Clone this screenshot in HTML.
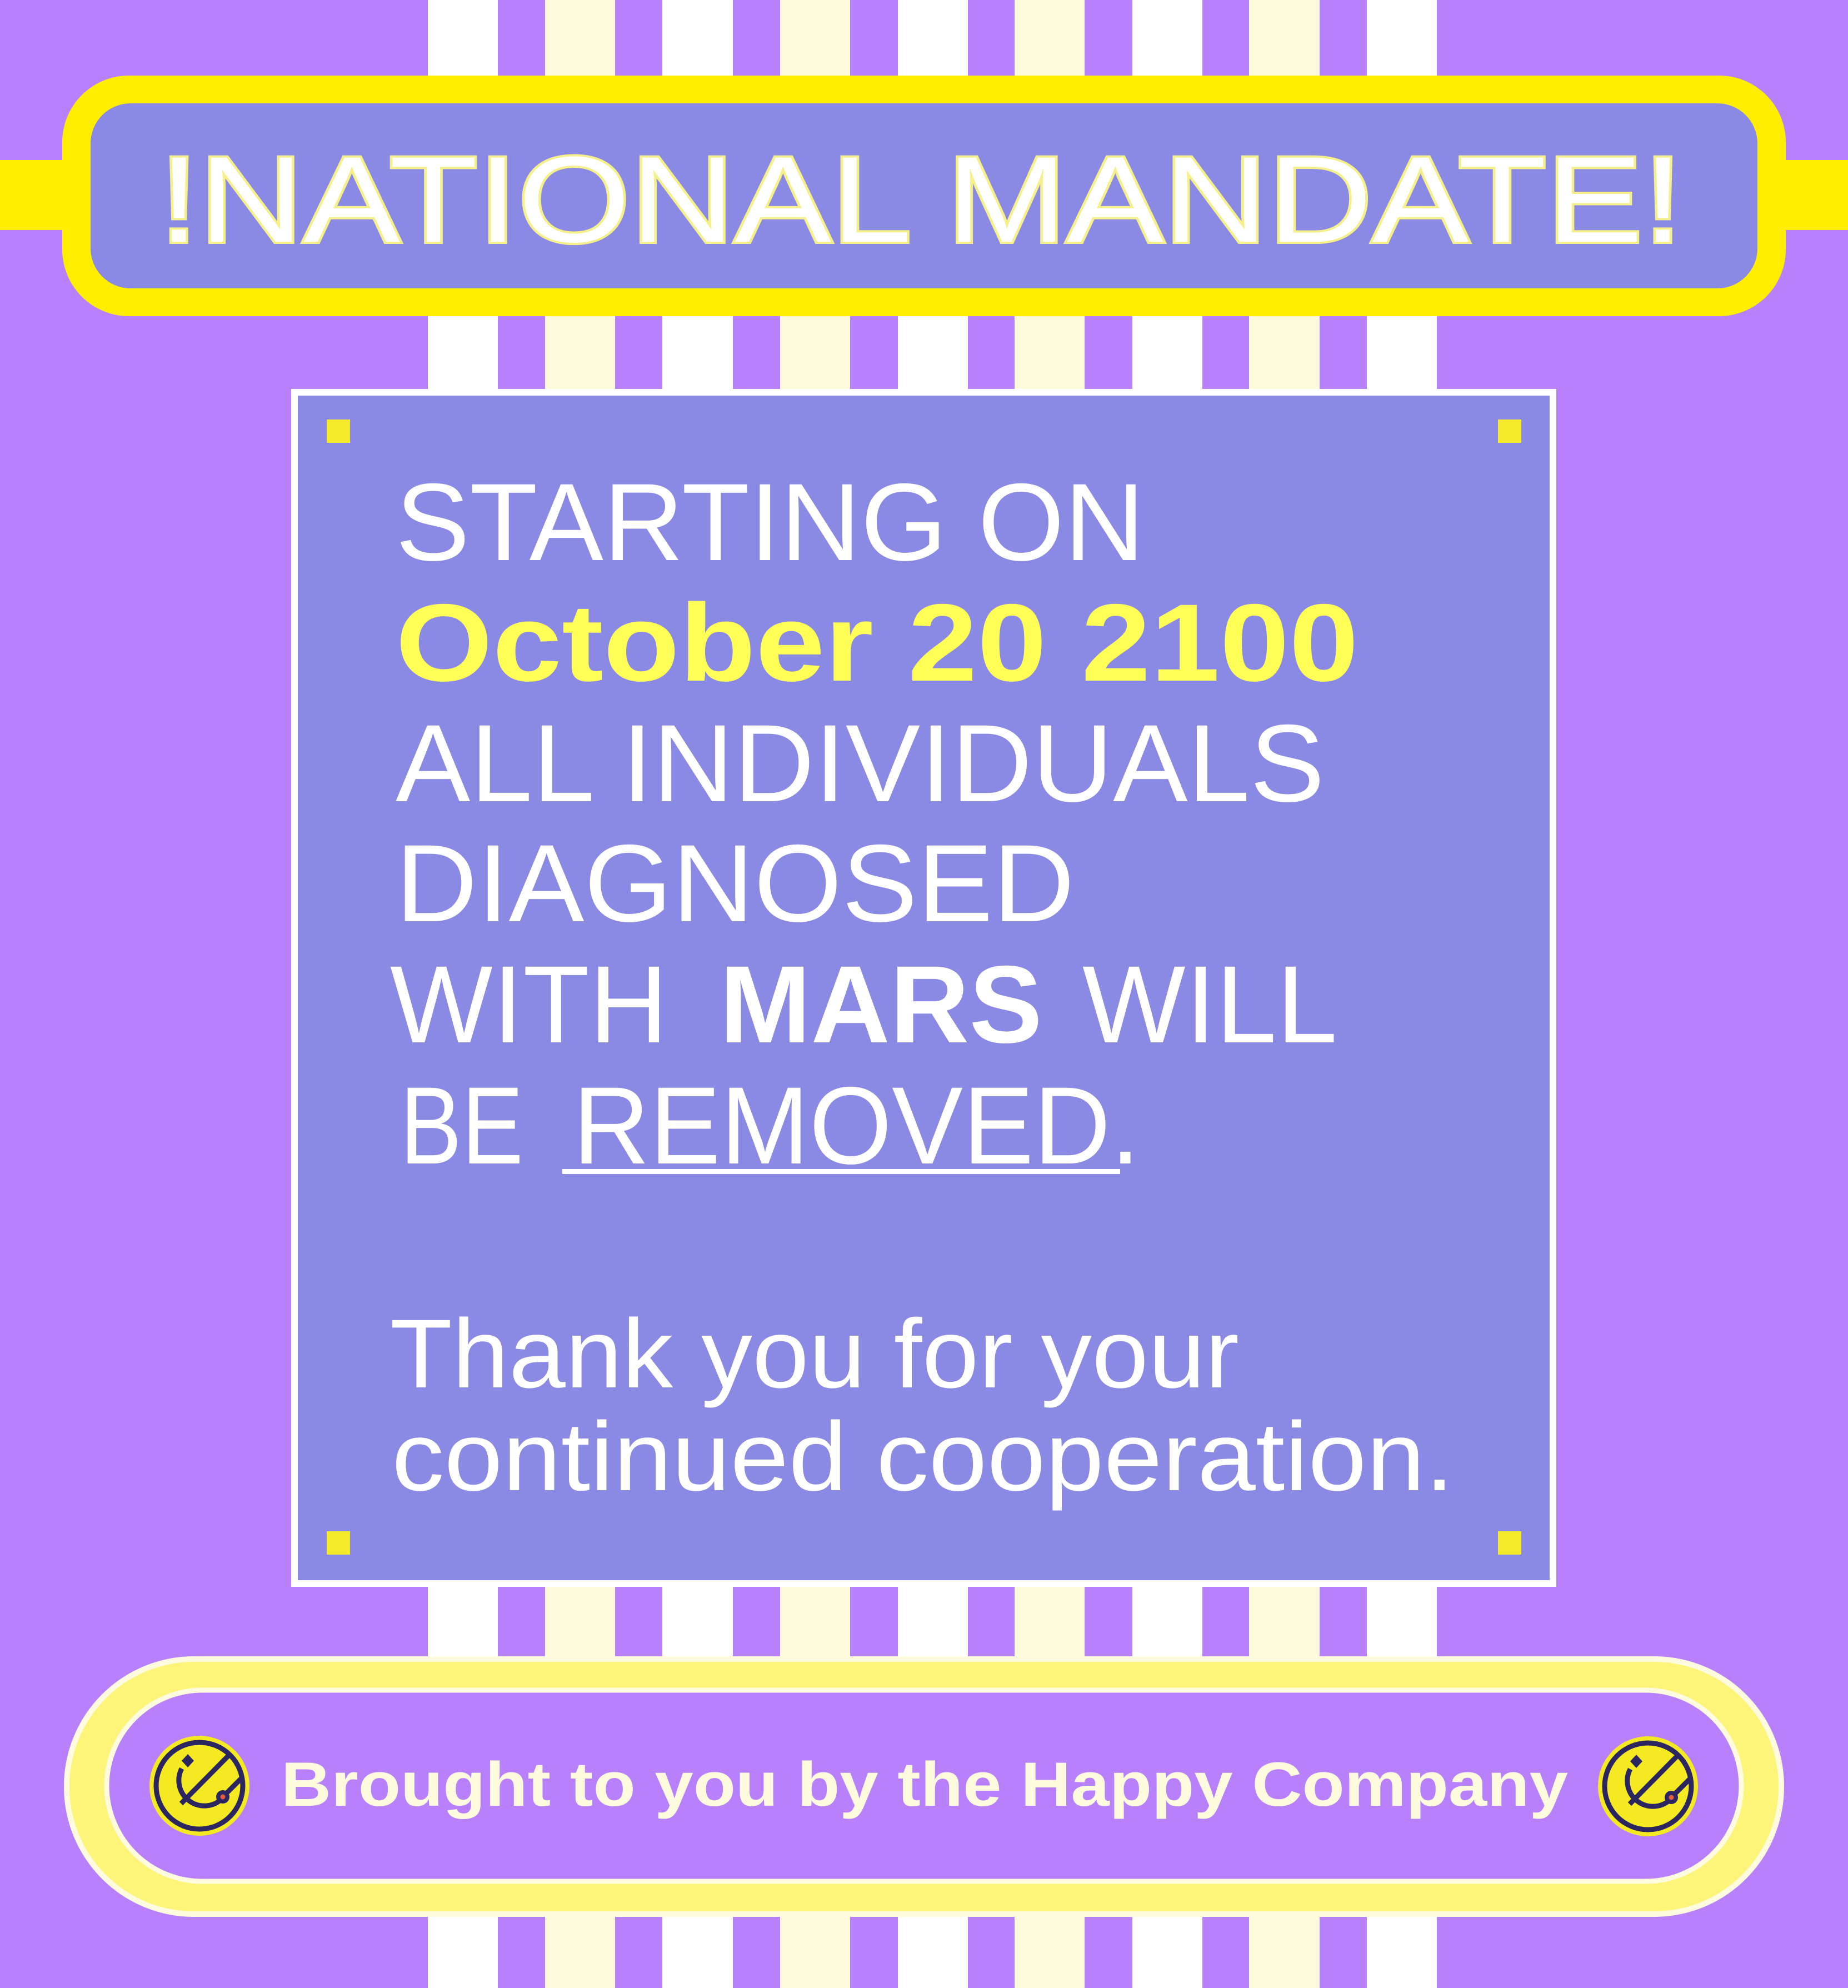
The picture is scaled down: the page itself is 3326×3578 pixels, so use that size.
<!DOCTYPE html>
<html><head><meta charset="utf-8"><style>
html,body{margin:0;padding:0;background:#b980fc}
svg{display:block}
text{font-family:"Liberation Sans",sans-serif}
</style></head><body>
<svg width="3326" height="3578" viewBox="0 0 3326 3578" xmlns="http://www.w3.org/2000/svg">
<rect width="3326" height="3578" fill="#b980fc"/>
<g>
<rect x="770" y="0" width="126" height="3578" fill="#ffffff"/>
<rect x="981" y="0" width="126" height="3578" fill="#fefadc"/>
<rect x="1192" y="0" width="127" height="3578" fill="#ffffff"/>
<rect x="1404" y="0" width="126" height="3578" fill="#fefadc"/>
<rect x="1616" y="0" width="126" height="3578" fill="#ffffff"/>
<rect x="1826" y="0" width="126" height="3578" fill="#fefadc"/>
<rect x="2038" y="0" width="126" height="3578" fill="#ffffff"/>
<rect x="2248" y="0" width="127" height="3578" fill="#fefadc"/>
<rect x="2460" y="0" width="126" height="3578" fill="#ffffff"/>
</g>
<rect x="0" y="288" width="3326" height="126" fill="#ffee00"/>
<rect x="112" y="136" width="3102" height="433" rx="120" fill="#ffee00"/>
<rect x="163" y="186" width="3000" height="333" rx="72" fill="#8a8ae4"/>
<text x="286" y="435" font-size="220" textLength="2743" lengthAdjust="spacingAndGlyphs" fill="#ffffff" stroke="#f6f08a" stroke-width="8" paint-order="stroke">!NATIONAL MANDATE!</text>
<rect x="530" y="706" width="2265" height="2144" fill="#8a8ae4" stroke="#ffffff" stroke-width="12"/>
<rect x="588" y="755" width="42" height="42" fill="#f5e92c"/>
<rect x="2696" y="755" width="42" height="42" fill="#f5e92c"/>
<rect x="588" y="2756" width="42" height="42" fill="#f5e92c"/>
<rect x="2696" y="2756" width="42" height="42" fill="#f5e92c"/>
<g fill="#ffffff" font-size="198">
<text x="712" y="1008" textLength="1348" lengthAdjust="spacingAndGlyphs">STARTING ON</text>
<text x="712" y="1225" textLength="1733" lengthAdjust="spacingAndGlyphs" font-weight="bold" fill="#ffff57">October 20 2100</text>
<text x="712" y="1442" textLength="1672" lengthAdjust="spacingAndGlyphs">ALL INDIVIDUALS</text>
<text x="712" y="1658" textLength="1222" lengthAdjust="spacingAndGlyphs">DIAGNOSED</text>
<text x="702" y="1876" textLength="500" lengthAdjust="spacingAndGlyphs">WITH</text>
<text x="1295" y="1876" textLength="581" lengthAdjust="spacingAndGlyphs" font-weight="bold">MARS</text>
<text x="1948" y="1876" textLength="459" lengthAdjust="spacingAndGlyphs">WILL</text>
<text x="720" y="2094" textLength="222" lengthAdjust="spacingAndGlyphs">BE</text>
<text x="1031" y="2094" textLength="1021" lengthAdjust="spacingAndGlyphs">REMOVED.</text>
<rect x="1012" y="2104" width="1004" height="9"/>
<text x="702" y="2497" font-size="176" textLength="1528" lengthAdjust="spacingAndGlyphs">Thank you for your</text>
<text x="705" y="2682" font-size="176" textLength="1912" lengthAdjust="spacingAndGlyphs">continued cooperation.</text>
</g>
<rect x="120" y="2986" width="3086" height="459" rx="229" fill="#fdf57a" stroke="#fffbdf" stroke-width="10"/>
<rect x="192" y="3042" width="2942" height="344" rx="172" fill="#b980fc" stroke="#fffbdf" stroke-width="9"/>
<text x="506" y="3250" font-size="112" font-weight="bold" fill="#fffbdf" textLength="2316" lengthAdjust="spacingAndGlyphs">Brought to you by the Happy Company</text>
<defs>
<g id="ic">
<circle r="90" fill="#f5e922"/>
<circle r="78" fill="none" stroke="#2b2560" stroke-width="9"/>
<path d="M -33 32 L 52 -54" stroke="#2b2560" stroke-width="9" fill="none"/>
<path d="M -32 -31 A 46 46 0 0 0 40 24" stroke="#2b2560" stroke-width="9" fill="none"/>
<path d="M 42 20 L 76 -14" stroke="#2b2560" stroke-width="9" fill="none"/>
<circle cx="42" cy="20" r="12" fill="#2b2560"/>
<circle cx="42" cy="20" r="4.5" fill="#e85a3a"/>
<path d="M -21 -57 L -10 -45 L -21 -33 L -32 -45 Z" fill="#2b2560"/>
</g>
</defs>
<use href="#ic" x="359" y="3214"/>
<use href="#ic" x="2966" y="3215"/>
</svg>
</body></html>
